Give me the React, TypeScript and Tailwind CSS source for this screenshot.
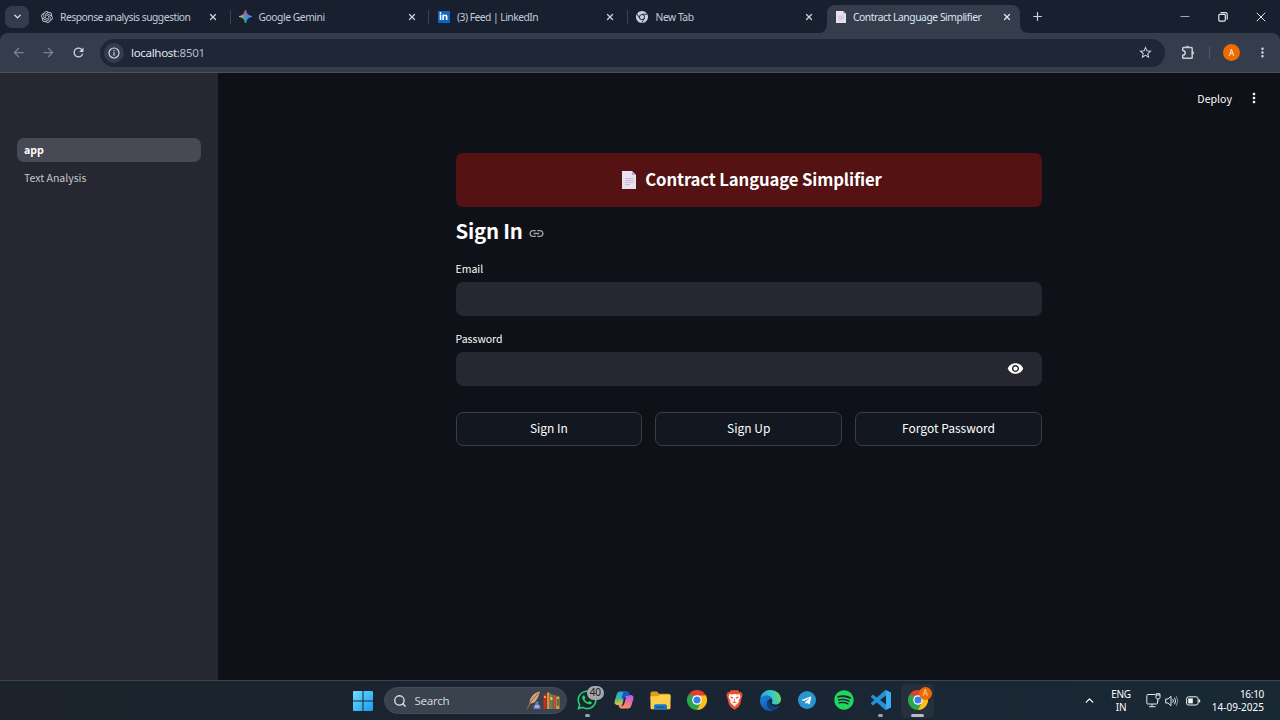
import React from "react";
import { RiOpenaiFill } from "react-icons/ri";
import { FaLinkedinIn, FaWhatsapp, FaSpotify, FaTelegramPlane } from "react-icons/fa";
import { MdArrowBack, MdArrowForward, MdRefresh, MdStarBorder, MdMoreVert, MdVisibility, MdLink } from "react-icons/md";
import { ChevronDown, ChevronUp, Plus, X, Search } from "lucide-react";

const uiFont = "font-['Noto_Sans','Open_Sans',sans-serif]";
const pageFont = "font-['Noto_Sans_CJK_SC',sans-serif]";

function GeminiIcon() {
  return (
    <svg width="13" height="13" viewBox="0 0 24 24">
      <defs>
        <linearGradient id="gemA" x1="0" y1="0.5" x2="1" y2="0.5">
          <stop offset="0" stopColor="#f6c22b" />
          <stop offset="0.35" stopColor="#6f9c98" />
          <stop offset="0.55" stopColor="#4285f4" />
          <stop offset="1" stopColor="#4a8cf7" />
        </linearGradient>
        <linearGradient id="gemB" x1="0.5" y1="0" x2="0.5" y2="1">
          <stop offset="0" stopColor="#f0483e" />
          <stop offset="0.45" stopColor="#f0483e" stopOpacity="0" />
          <stop offset="0.6" stopColor="#2fb15a" stopOpacity="0" />
          <stop offset="1" stopColor="#2fb15a" />
        </linearGradient>
      </defs>
      <path d="M12 0C13 7 17 11 24 12 17 13 13 17 12 24 11 17 7 13 0 12 7 11 11 7 12 0Z" fill="url(#gemA)" stroke="url(#gemA)" strokeWidth="1.6" />
      <path d="M12 0C13 7 17 11 24 12 17 13 13 17 12 24 11 17 7 13 0 12 7 11 11 7 12 0Z" fill="url(#gemB)" stroke="url(#gemB)" strokeWidth="1.6" />
    </svg>
  );
}

function ChromeIcon({ size, mono = false }: { size: number; mono?: boolean }) {
  return (
    <svg width={size} height={size} viewBox="0 0 48 48">
      <path d="M24 24 L3.2 12 A24 24 0 0 1 44.8 12 Z" fill={mono ? "#c9cfdd" : "#e63b2e"} />
      <path d="M24 24 L44.8 12 A24 24 0 0 1 24 48 Z" fill={mono ? "#c9cfdd" : "#fbc116"} />
      <path d="M24 24 L24 48 A24 24 0 0 1 3.2 12 Z" fill={mono ? "#c9cfdd" : "#2da44e"} />
      <path d="M24 13 H44.8 L33.5 29.5Z" fill={mono ? "#c9cfdd" : "#fbc116"} />
      <path d="M14.5 29.5 L3.2 12 L24 13Z" fill={mono ? "#c9cfdd" : "#2da44e"} />
      <path d="M33.5 29.5 L24 48 L14.5 29.5Z" fill={mono ? "#c9cfdd" : "#2da44e"} />
      {mono && <path d="M24 13H44 M14.5 29.5 L4.5 12 M33.5 29.5 L23 47" stroke="#1a2232" strokeWidth="3.5" />}
      <circle cx="24" cy="24" r="11.5" fill={mono ? "#1a2232" : "#fff"} />
      <circle cx="24" cy="24" r="8.5" fill={mono ? "#c9cfdd" : "#3b7ded"} />
    </svg>
  );
}

function PageIcon({ w, h }: { w: number; h: number }) {
  return (
    <svg width={w} height={h} viewBox="0 0 14 18" preserveAspectRatio="none">
      <path d="M0 0H10L14 4V18H0Z" fill="#e9e0f1" />
      <path d="M10 0V4H14Z" fill="#b9a7c5" />
      <path d="M3 7.5H11.5M3 9.5H11.5M3 11.5H11.5M3 13.5H8" stroke="#c3b1ca" strokeWidth="0.8" />
    </svg>
  );
}

function Tab({ icon, title, spacing, last }: { icon: React.ReactNode; title: string; spacing: string; last?: boolean }) {
  return (
    <div className="flex h-[33px] w-[198.5px] items-center pl-[7.5px]">
      <span className="flex w-[14px] justify-center">{icon}</span>
      <span className={`ml-[6.5px] flex-1 whitespace-nowrap pt-[2px] text-[10.3px] text-[#c5cbda] ${spacing}`}>{title}</span>
      <X size={10} strokeWidth={3} className="mr-[11.5px] text-[#ccd2df]" />
      <span className={`h-[14px] w-px ${last ? "bg-transparent" : "bg-[#3b4353]"}`} />
    </div>
  );
}

function TabStrip() {
  return (
    <div className="flex h-[33px] items-center bg-[#182030] pl-[5px]">
      <button className="flex h-[22px] w-[24px] items-center justify-center rounded-[7px] bg-[#343c4c] text-[#dde2ee]">
        <ChevronDown size={11} strokeWidth={3} />
      </button>
      <div className="ml-[3px] flex">
        <Tab icon={<RiOpenaiFill size={14} color="#d3d7df" />} title="Response analysis suggestion" spacing="tracking-[-0.49px]" />
        <Tab icon={<GeminiIcon />} title="Google Gemini" spacing="tracking-[-0.45px]" />
        <Tab
          icon={<span className="flex h-[12px] w-[12px] items-center justify-center bg-[#0b65c2]"><FaLinkedinIn size={9} color="#fff" /></span>}
          title="(3) Feed | LinkedIn"
          spacing="tracking-[-0.52px]"
        />
        <Tab icon={<ChromeIcon size={12} mono />} title="New Tab" spacing="tracking-[-0.45px]" last />
      </div>
      <div className="relative ml-px mt-[5px] flex h-[28px] w-[193px] items-center self-start rounded-t-[8px] bg-[#353d4d] pb-[4px] pl-[9px]">
        <svg className="absolute bottom-0 left-[-8px]" width="8" height="8"><path d="M8 0V8H0A8 8 0 0 0 8 0Z" fill="#353d4d" /></svg>
        <svg className="absolute bottom-0 right-[-8px]" width="8" height="8"><path d="M0 0V8H8A8 8 0 0 1 0 0Z" fill="#353d4d" /></svg>
        <PageIcon w={10} h={12} />
        <span className="ml-[7px] flex-1 whitespace-nowrap pt-px text-[10.3px] tracking-[-0.44px] text-[#dfe4f0]">Contract Language Simplifier</span>
        <X size={10} strokeWidth={3} className="mr-[8px] text-[#e3e7ef]" />
      </div>
      <Plus size={13} strokeWidth={2.2} className="ml-[11px] text-[#cbd1df]" />
      <div className="ml-auto flex items-center gap-[28px] pr-[14px] text-[#e5e8ee]">
        <svg width="10" height="10"><path d="M0.5 4.5H9.5" stroke="#a1a7b2" /></svg>
        <svg width="10" height="10" fill="none" stroke="currentColor" strokeWidth="1.2"><rect x="0.8" y="2.3" width="6.5" height="6.8" rx="1" /><path d="M2.5 0.7H7.5Q9.2 .7 9.2 2.5V7.5" /></svg>
        <svg width="10" height="10" stroke="currentColor"><path d="M0.8 0.8L9.2 9.2M9.2 0.8L0.8 9.2" /></svg>
      </div>
    </div>
  );
}

function Toolbar() {
  return (
    <div className="bg-[#182030]">
      <div className="flex h-[40px] items-center rounded-t-[8px] border-b border-[#4a4e56] bg-[#353d4d] pl-[11px]">
        <MdArrowBack size={15} color="#7b8392" />
        <MdArrowForward size={15} color="#7b8392" className="ml-[15px]" />
        <MdRefresh size={15} color="#ccd2df" className="ml-[15px]" />
        <div className="ml-[14px] flex h-[28px] w-[1065px] items-center rounded-full bg-[#1e2637] pl-[4px]">
          <span className="flex h-[20px] w-[20px] items-center justify-center rounded-full bg-[#343c4d]">
            <svg width="12" height="12" viewBox="0 0 12 12" fill="none" stroke="#d2d7e2" strokeWidth="1.2">
              <circle cx="6" cy="6" r="5" />
              <path d="M6 5.3V8.7M6 3V4.3" />
            </svg>
          </span>
          <span className="ml-[7px] pt-px text-[11.6px] tracking-[-0.35px] text-[#b4bac8]"><span className="text-[#e1e5ee]">localhost</span>:8501</span>
          <MdStarBorder size={15} color="#d0d6e2" className="ml-auto mr-[12.5px]" />
        </div>
        <svg className="ml-[16px]" width="14" height="15" viewBox="0 0 14 15" fill="none" stroke="#c8cedb" strokeWidth="1.5">
          <path d="M1.7 5.4V3.4Q1.7 2.6 2.5 2.6H10.4Q11.2 2.6 11.2 3.4V12.4Q11.2 13.2 10.4 13.2H2.5Q1.7 13.2 1.7 12.4V10.3A2.4 2.4 0 0 0 1.7 5.4Z" strokeLinejoin="round" />
          <path d="M4.8 2.6A1.6 1.6 0 0 1 8 2.6ZM11.2 6.3A1.6 1.6 0 0 1 11.2 9.5Z" fill="#c8cedb" strokeWidth="0.5" />
        </svg>
        <span className="ml-[14px] h-[13px] w-px bg-[#515968]" />
        <span className="ml-[13px] flex h-[17px] w-[17px] items-center justify-center rounded-full bg-[#ed6c02] text-[8px] text-white">A</span>
        <MdMoreVert size={15} color="#ccd2df" className="ml-[14.5px]" />
      </div>
    </div>
  );
}

function Sidebar() {
  return (
    <aside className={`flex w-[218px] flex-col bg-[#262730] px-[17px] pt-[65px] text-[10.6px] ${pageFont}`}>
      <a className="flex h-[24px] items-center rounded-[7px] bg-[#474953] pb-px pl-[7px] font-bold text-white">app</a>
      <a className="mt-[4px] flex h-[24px] items-center pb-px pl-[7px] text-[10.5px] text-[#c5c5c9]">Text Analysis</a>
    </aside>
  );
}

function ActionButton({ label }: { label: string }) {
  return <button className="h-[34px] flex-1 rounded-[7px] border border-[#3b3d45] bg-[#131720] pb-[3px] text-[12px] text-white">{label}</button>;
}

function MainPanel() {
  return (
    <main className={`flex flex-1 flex-col bg-[#0e1117] text-[#fafafa] ${pageFont}`}>
      <header className="flex h-[51px] items-center justify-end pr-[18px]">
        <span className="text-[10.6px]">Deploy</span>
        <MdMoreVert size={16} className="mb-px ml-[14px]" />
      </header>
      <div className="ml-[237.5px] mt-[29px] flex w-[586.5px] flex-col">
        <div className="flex h-[54px] items-center justify-center rounded-[7px] bg-[#541212] pl-[6px]">
          <PageIcon w={14} h={18} />
          <h1 className="ml-[9.5px] whitespace-nowrap pb-px text-[16.7px] font-bold leading-none tracking-[-0.12px] text-white">Contract Language Simplifier</h1>
        </div>
        <div className="mt-[7px] flex h-[34px] items-center">
          <h2 className="whitespace-nowrap pb-[2px] text-[20.4px] font-bold leading-none tracking-[-0.2px] text-white">Sign In</h2>
          <MdLink size={17} color="#a3a5a9" className="ml-[5px] mt-[5px]" />
        </div>
        <label className="mt-[12px] flex h-[18px] items-center text-[10.5px]">Email</label>
        <div className="mt-[4px] h-[34px] rounded-[7px] bg-[#262730]" />
        <label className="mt-[14px] flex h-[18px] items-center text-[10.5px]">Password</label>
        <div className="mt-[4px] flex h-[34px] items-center justify-end rounded-[7px] bg-[#262730] pb-[2px] pr-[18px]">
          <MdVisibility size={17} color="#fff" />
        </div>
        <div className="mt-[26px] flex gap-[13px]">
          <ActionButton label="Sign In" />
          <ActionButton label="Sign Up" />
          <ActionButton label="Forgot Password" />
        </div>
      </div>
    </main>
  );
}

function SearchArt() {
  return (
    <svg width="35" height="20" viewBox="0 0 35 20">
      <path d="M14 0.5C8 1.5 4 6 3.5 12L2 17L4.5 12.5C9 12.5 12 8 14 0.5Z" fill="#d9a982" />
      <path d="M1 18.5C4 11 8 6 12.5 2.5" stroke="#8a5a40" strokeWidth="1" fill="none" />
      <path d="M9.5 10.5H12.5V13L14.5 15V18H7.5V15L9.5 13Z" fill="#6c78b8" />
      <rect x="9" y="14.5" width="4" height="2" fill="#b9c0e6" />
      <rect x="17.5" y="3" width="3" height="15" fill="#b8322b" />
      <rect x="18" y="5" width="2" height="2" fill="#e9a93a" />
      <rect x="21" y="1.5" width="2.6" height="16.5" fill="#e0912e" />
      <rect x="24" y="3" width="2.8" height="15" fill="#4d8a55" />
      <rect x="24.4" y="6" width="2" height="3" fill="#e8c95d" />
      <rect x="27.2" y="4" width="2.6" height="14" fill="#d6453b" />
      <rect x="30.2" y="5.5" width="3.2" height="12.5" fill="#d9a441" />
      <rect x="30.8" y="8" width="2" height="7" fill="#48724c" />
    </svg>
  );
}

function CopilotIcon() {
  return (
    <svg width="20" height="18" viewBox="0 0 20 18">
      <defs>
        <linearGradient id="cpA" x1="0" y1="0" x2="0.2" y2="1"><stop stopColor="#28a7ef" /><stop offset="0.5" stopColor="#37b7a0" /><stop offset="1" stopColor="#f1c42f" /></linearGradient>
        <linearGradient id="cpB" x1="0.5" y1="0" x2="0.3" y2="1"><stop stopColor="#a764ed" /><stop offset="0.5" stopColor="#ee6e9c" /><stop offset="1" stopColor="#f7995b" /></linearGradient>
      </defs>
      <path d="M5.5 0.5H13Q14.7 .7 15.3 3L15.8 4.8H13Q11.5 5 11 6.8L9.2 12.5Q8.7 14 7.3 14H3Q0 13.5 0.6 10.3L2.8 3Q3.5 .6 5.5 .5Z" fill="url(#cpA)" />
      <path d="M14.5 17.5H7Q5.3 17.3 4.7 15L4.2 13.2H7Q8.5 13 9 11.2L10.8 5.5Q11.3 4 12.7 4H17Q20 4.5 19.4 7.7L17.2 15Q16.5 17.4 14.5 17.5Z" fill="url(#cpB)" />
      <path d="M9.5 .5H13Q14.7 .7 15.3 3L15.8 4.8H12.7Q11.3 5 10.8 6.5L8.7 12.5L9.2 8L7.5 7Z" fill="#1853c9" />
      <path d="M8.7 12.5L10.8 6L12 6.5L10 13.5L7.5 16Z" fill="#1a2431" />
    </svg>
  );
}

function FolderIcon() {
  return (
    <svg width="21" height="19" viewBox="0 0 21 19">
      <path d="M.5 2Q.5 .5 2 .5H7L9 2.7H19Q20.5 2.7 20.5 4.2V9H.5Z" fill="#dd9e22" />
      <path d="M.5 5.2H8L10 3.7H19.5Q20.5 3.7 20.5 5V16.8Q20.5 18.3 19 18.3H2Q.5 18.3 .5 16.8Z" fill="#fbcf4b" />
      <path d="M4 18.5V15Q4 13.2 5.7 13.2H15.3Q17 13.2 17 15V18.5Z" fill="#1679c9" />
      <path d="M6.5 16.2H14.5" stroke="#0c4f98" strokeWidth="1.2" />
    </svg>
  );
}

function BraveIcon() {
  return (
    <svg width="17" height="20" viewBox="0 0 17 20">
      <path d="M5 .3H12L13.7 2.2H15.3L16.6 5 15.9 7 14.2 14Q13.5 16 12 17.2L8.5 19.7 5 17.2Q3.5 16 2.8 14L1.1 7 .4 5 1.7 2.2H3.3Z" fill="#f2502b" />
      <path d="M3.5 4L6 4.5 8.5 4 11 4.5 13.5 4 14.5 7 12.8 10.2 12.6 12.5 8.5 16.5 4.4 12.5 4.2 10.2 2.5 7Z" fill="#fff" />
      <path d="M4.5 7L7 7.5 6.3 8.5ZM12.5 7L10 7.5 10.7 8.5ZM8.5 8.5V11.5M6.3 12.8L8.5 11.8 10.7 12.8" fill="#f2502b" stroke="#f2502b" strokeWidth=".7" />
    </svg>
  );
}

function EdgeIcon() {
  return (
    <svg width="21" height="21" viewBox="0 0 24 24">
      <defs>
        <linearGradient id="edA" x1="0" y1="0.5" x2="1" y2="0.3"><stop stopColor="#2a9fe5" /><stop offset="0.55" stopColor="#36c5d1" /><stop offset="1" stopColor="#70db55" /></linearGradient>
        <linearGradient id="edB" x1="0" y1="0" x2="0.7" y2="1"><stop stopColor="#1b86dd" /><stop offset="1" stopColor="#0f55a6" /></linearGradient>
      </defs>
      <path d="M.3 10C1 4 6 0 12 0C19 0 24 5 24 10.5C24 14.5 21 16.5 17.7 16.5C14.5 16.5 13.2 15.3 13.6 14.5C15.5 11 12.5 6.5 8 6.5C4.5 6.5 1.5 8 .3 10Z" fill="url(#edA)" />
      <path d="M0 12C0 8.5 3.5 6.7 7.5 6.7C11 6.7 13.5 9 13.7 11C10.5 9.8 8 12.5 8 15.5C8 19.5 11.5 22.5 15 23.5C7 26 0 19.5 0 12Z" fill="url(#edB)" />
      <path d="M11 11C8.5 11.5 7.8 14 8 16C8.7 21 13 23.5 15.5 23.4C18.5 22.5 21.5 20.2 22.6 17.8C18.5 20 12.5 18.5 11 15.3C10.3 13.7 10.4 12 11 11Z" fill="#123f80" />
    </svg>
  );
}

function VsCodeIcon() {
  return (
    <svg width="20" height="20" viewBox="0 0 24 24">
      <path fill="#2492d8" d="M23.15 2.587L18.21.21a1.494 1.494 0 0 0-1.705.29l-9.46 8.63-4.12-3.128a.999.999 0 0 0-1.276.057L.327 7.261A1 1 0 0 0 .326 8.74L3.899 12 .326 15.26a1 1 0 0 0 .001 1.479L1.65 17.94a.999.999 0 0 0 1.276.057l4.12-3.128 9.46 8.63a1.492 1.492 0 0 0 1.704.29l4.942-2.377A1.5 1.5 0 0 0 24 20.06V3.939a1.5 1.5 0 0 0-.85-1.352zm-5.146 14.861L10.826 12l7.178-5.448v10.896z" />
      <path fill="#3cacf0" d="M18 .2L23.15 2.587Q24 3.1 24 4V20Q24 20.9 23.15 21.4L18 23.8Z" />
    </svg>
  );
}

function Dock({ children, active }: { children: React.ReactNode; active?: boolean }) {
  return (
    <div className={`relative flex h-[34px] w-[32.7px] items-center justify-center rounded-[4px] pb-px ${active ? "bg-[#26303d]" : ""}`}>{children}</div>
  );
}

function Taskbar() {
  return (
    <footer className="flex h-[40px] items-center border-t border-[#3d444b] bg-linear-to-r from-[#1b2229] via-[#1a2433] to-[#182934] pl-[353px] text-white">
      <svg width="20" height="20" viewBox="0 0 20 20">
        <defs><linearGradient id="win" x1="0" y1="0" x2="1" y2="1"><stop stopColor="#75dcff" /><stop offset="1" stopColor="#139cf0" /></linearGradient></defs>
        <path d="M0 1Q0 0 1 0H9.5V9.5H0ZM10.5 0H19Q20 0 20 1V9.5H10.5ZM0 10.5H9.5V20H1Q0 20 0 19ZM10.5 10.5H20V19Q20 20 19 20H10.5Z" fill="url(#win)" />
      </svg>
      <div className="ml-[11px] flex h-[27px] w-[183px] items-center rounded-full border border-[#434b57] bg-[#3a424e] pl-[8px] pr-[5px]">
        <Search size={14} strokeWidth={2.2} className="text-[#e2e6eb]" />
        <span className="ml-[7.5px] flex-1 text-[11.6px] tracking-[-0.3px] text-[#cfd3d9]">Search</span>
        <SearchArt />
      </div>
      <div className="ml-[4px] flex gap-[4px]">
        <Dock>
          <FaWhatsapp size={22} color="#25d366" />
          <span className="absolute right-[0px] top-[2px] flex h-[14px] w-[17px] items-center justify-center rounded-full bg-[#a5a8aa] text-[10px] tracking-[-0.4px] text-[#15191d]">40</span>
          <span className="absolute bottom-[1px] h-[2.5px] w-[5px] rounded-full bg-[#9ca2a9]" />
        </Dock>
        <Dock><CopilotIcon /></Dock>
        <Dock><FolderIcon /></Dock>
        <Dock><ChromeIcon size={20} /></Dock>
        <Dock><BraveIcon /></Dock>
        <Dock><EdgeIcon /></Dock>
        <Dock><span className="flex h-[18px] w-[18px] items-center justify-center rounded-full bg-[#2796d0]"><FaTelegramPlane size={11} className="-ml-[2px]" /></span></Dock>
        <Dock><FaSpotify size={20} color="#1ed760" /></Dock>
        <Dock>
          <VsCodeIcon />
          <span className="absolute bottom-[1px] h-[2.5px] w-[5px] rounded-full bg-[#9ca2a9]" />
        </Dock>
        <Dock active>
          <ChromeIcon size={20} />
          <span className="absolute right-[2px] top-[3px] flex h-[13px] w-[13px] items-center justify-center rounded-full bg-[#ed6c02] text-[8px] text-[#ffd9b8]">A</span>
          <span className="absolute bottom-[1px] h-[2.5px] w-[13px] rounded-full bg-[#b8bcc1]" />
        </Dock>
      </div>
      <div className="ml-auto flex items-center pr-[16px]">
        <ChevronUp size={13} strokeWidth={2.4} />
        <div className="ml-[13px] w-[24px] text-center text-[10px] leading-[13px] tracking-[-0.25px]">ENG<br />IN</div>
        <svg className="ml-[12.5px]" width="15" height="15" viewBox="0 0 15 15" fill="none" stroke="#e4e8ec">
          <path d="M9 1.5H1.8Q.8 1.5 .8 2.5V10Q.8 11 1.8 11H10.5Q11.5 11 11.5 10V7.5M6 11V13.5M3 13.7H9.5M10 .8H14V4.5Q14 6 12 6Q10 6 10 4.5ZM12 6V8.5" />
          <path d="M11 .5V3M13 .5V3" />
        </svg>
        <svg className="ml-[4.5px]" width="14" height="12" viewBox="0 0 14 12" fill="none" stroke="#e4e8ec">
          <path d="M.7 4H3L6 1.2V10.8L3 8H.7Z" strokeLinejoin="round" />
          <path d="M7.8 4.2Q9 6 7.8 7.8M9.5 2.7Q11.7 6 9.5 9.3" />
          <path d="M11.3 1.2Q14.3 6 11.3 10.8" stroke="#8c949c" />
        </svg>
        <svg className="ml-[7px]" width="15" height="10" viewBox="0 0 15 10" fill="none" stroke="#f1f3f5">
          <rect x=".6" y=".8" width="11.5" height="8.2" rx="2" />
          <rect x="2.2" y="2.4" width="4.6" height="5" fill="#f1f3f5" stroke="none" />
          <path d="M13.4 3.5V6.3" strokeWidth="1.5" />
        </svg>
        <div className="ml-[10px] w-[53px] whitespace-nowrap text-right text-[10px] leading-[13px]"><span className="tracking-[-0.3px]">16:10</span><br />14-09-2025</div>
      </div>
    </footer>
  );
}

export default function App() {
  return (
    <div className={`flex h-[720px] w-[1280px] flex-col overflow-hidden bg-[#0e1117] ${uiFont}`}>
      <TabStrip />
      <Toolbar />
      <div className="flex flex-1">
        <Sidebar />
        <MainPanel />
      </div>
      <Taskbar />
    </div>
  );
}
